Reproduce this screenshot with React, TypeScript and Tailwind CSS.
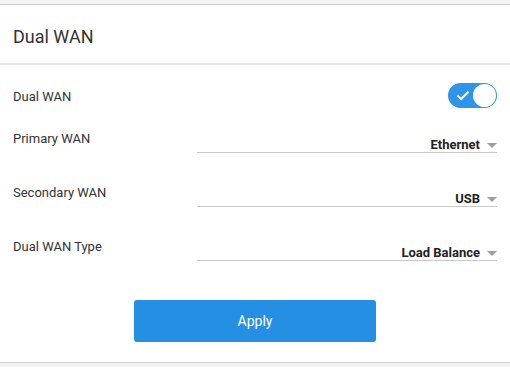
import React from "react";

function Toggle() {
  return (
    <div className="relative w-[49px] h-[25px] rounded-full bg-[#2f95e8]">
      <svg className="absolute left-[8px] top-[7px]" width="14" height="11" viewBox="0 0 14 11">
        <path d="M1.5 5.5 L5.2 9 L12.5 1.8" fill="none" stroke="#ffffff" strokeWidth="2" />
      </svg>
      <div className="absolute right-[1px] top-[1px] w-[23px] h-[23px] rounded-full bg-white" />
    </div>
  );
}

function SelectRow({ label, value }: { label: string; value: string }) {
  return (
    <div className="flex h-[25px]">
      <div className="w-[184px] pt-[3px] text-[13px] leading-[16px] text-[#333]">{label}</div>
      <div className="flex-1 flex items-end justify-end border-b border-[#c9c9c9]">
        <span className="relative top-[1px] text-[13px] leading-[16px] font-bold text-[#222]">{value}</span>
        <svg className="ml-[7px] mb-[4px]" width="10" height="5" viewBox="0 0 10 5">
          <path d="M0 0 L10 0 L5 5 Z" fill="#9e9e9e" />
        </svg>
      </div>
    </div>
  );
}

export default function App() {
  return (
    <div className="w-[510px] h-[367px] bg-[#f3f3f3] overflow-hidden" style={{ fontFamily: "Roboto, 'Liberation Sans', sans-serif" }}>
      <div className="h-[4px]" />
      <div className="bg-white border-t border-b border-[#cfcfcf]">
        <div className="h-[58px] flex items-center pt-[4px] px-[13px] text-[18px] text-[#333]">Dual WAN</div>
        <div className="h-[2px] bg-[#e6e6e6]" />
        <div className="px-[13px] pt-[18px]">
          <div className="flex items-center justify-between h-[25px]">
            <span className="relative top-[1px] text-[13px] leading-[16px] text-[#333]">Dual WAN</span>
            <Toggle />
          </div>
          <div className="mt-[20px] flex flex-col gap-[29px]">
            <SelectRow label="Primary WAN" value="Ethernet" />
            <SelectRow label="Secondary WAN" value="USB" />
            <SelectRow label="Dual WAN Type" value="Load Balance" />
          </div>
          <div className="flex justify-center pt-[39px] pb-[20px]">
            <button className="w-[242px] h-[42px] rounded-[3px] bg-[#2590e3] text-white text-[14px]">Apply</button>
          </div>
        </div>
      </div>
    </div>
  );
}
